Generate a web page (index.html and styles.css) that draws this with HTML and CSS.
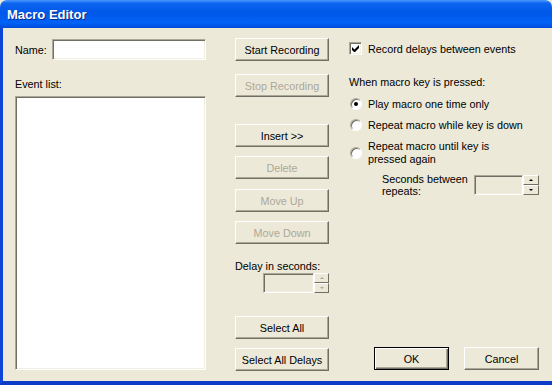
FILE: index.html
```html
<!DOCTYPE html>
<html lang="en">

<head>
    <meta charset="UTF-8">
    <meta name="viewport" content="width=device-width, initial-scale=1.0">
    <title>Macro Editor</title>
    <link rel="stylesheet" href="styles.css">
</head>

<body>

    <div class="window">
        <div class="titlebar">
            <span class="title">Macro Editor</span>
        </div>

        <div class="frame">
            <div class="dialog">

                <div class="col-list">
                    <div class="name-row">
                        <label for="macroName">Name:</label>
                        <input type="text" id="macroName" class="field name-field">
                    </div>
                    <label class="list-label">Event list:</label>
                    <div class="field listbox"></div>
                </div>

                <div class="col-buttons">
                    <button type="button" class="btn btn-start">Start Recording</button>
                    <button type="button" class="btn btn-stop" disabled>Stop Recording</button>
                    <button type="button" class="btn btn-insert">Insert &gt;&gt;</button>
                    <button type="button" class="btn btn-gap" disabled>Delete</button>
                    <button type="button" class="btn btn-gap2" disabled>Move Up</button>
                    <button type="button" class="btn btn-gap" disabled>Move Down</button>

                    <label class="delay-label">Delay in seconds:</label>
                    <div class="spin spin-delay">
                        <input type="text" class="field spin-field" disabled>
                        <div class="spin-arrows">
                            <span class="arrow arrow-up"></span>
                            <span class="arrow arrow-down"></span>
                        </div>
                    </div>

                    <button type="button" class="btn btn-select">Select All</button>
                    <button type="button" class="btn btn-gap">Select All Delays</button>
                </div>

                <div class="col-options">
                    <label class="check-row">
                        <span class="checkbox">
                            <svg width="7" height="7" viewBox="0 0 7 7">
                                <path d="M0 2v3l2 2h1l4-4V0L2.5 4.5z" fill="#000" />
                            </svg>
                        </span>
                        Record delays between events
                    </label>

                    <div class="group-label">When macro key is pressed:</div>

                    <label class="radio-row">
                        <span class="radio checked"></span>
                        Play macro one time only
                    </label>
                    <label class="radio-row">
                        <span class="radio"></span>
                        Repeat macro while key is down
                    </label>
                    <label class="radio-row two-line">
                        <span class="radio"></span>
                        <span>Repeat macro until key is<br>pressed again</span>
                    </label>

                    <div class="repeat-row">
                        <span class="repeat-label">Seconds between<br>repeats:</span>
                        <div class="spin spin-repeat">
                            <input type="text" class="field spin-field" disabled>
                            <div class="spin-arrows">
                                <span class="arrow arrow-up dark"></span>
                                <span class="arrow arrow-down dark"></span>
                            </div>
                        </div>
                    </div>

                    <div class="dialog-buttons">
                        <button type="button" class="btn btn-default">OK</button>
                        <button type="button" class="btn btn-cancel">Cancel</button>
                    </div>
                </div>

            </div>
        </div>
    </div>

</body>

</html>
```

FILE: styles.css
```css
body {
    margin: 0;
    padding: 0;
    font-family: "Liberation Sans", Arial, sans-serif;
    font-size: 10.8px;
    color: #000;
    background-color: #ece9d8;
}

.window {
    width: 552px;
    height: 385px;
    overflow: hidden;
}

.titlebar {
    height: 28px;
    box-sizing: border-box;
    padding-left: 7px;
    display: flex;
    align-items: center;
    border-radius: 7px 7px 0 0;
    background: linear-gradient(to bottom, #4a98ff 0%, #0d64f0 12%, #0058e8 45%, #0062f6 82%, #004ad8 100%);
}

.title {
    color: #fff;
    font-weight: bold;
    font-size: 13px;
    text-shadow: 1px 1px #0a2a8a;
    margin-top: 1px;
}

.frame {
    height: 357px;
    box-sizing: border-box;
    border-left: 3px solid #0b46d8;
    border-bottom: 4px solid #0a3cc9;
    background-color: #ece9d8;
}

.dialog {
    display: flex;
    height: 353px;
    padding-left: 12px;
}

/* sunken edit fields */
.field {
    box-sizing: border-box;
    border: 1px solid;
    border-color: #aca899 #fff #fff #aca899;
    box-shadow: inset 1px 1px #716f64, inset -1px -1px #f1efe2;
    background-color: #fff;
    margin: 0;
    padding: 0 3px;
    font: inherit;
    outline: none;
}

.field:disabled {
    background-color: #ece9d8;
}

/* left column */
.col-list {
    width: 191px;
    padding-top: 11px;
}

.name-row {
    display: flex;
    align-items: center;
    height: 21px;
}

.name-row label {
    width: 37px;
}

.name-field {
    width: 154px;
    height: 21px;
}

.list-label {
    display: block;
    margin-top: 17px;
    line-height: 14px;
}

.listbox {
    margin-top: 5px;
    height: 274px;
    width: 191px;
}

/* middle column */
.col-buttons {
    width: 94px;
    margin-left: 29px;
    padding-top: 10px;
    display: flex;
    flex-direction: column;
}

.btn {
    width: 94px;
    height: 23px;
    box-sizing: border-box;
    padding: 0;
    font: inherit;
    color: #000;
    background-color: #ece9d8;
    border: 1px solid;
    border-color: #fff #716f64 #716f64 #fff;
    box-shadow: inset -1px -1px #aca899;
}

.btn:disabled {
    color: #aca899;
}

.btn-stop {
    margin-top: 13px;
}

.btn-insert {
    margin-top: 27px;
}

.btn-gap {
    margin-top: 9px;
}

.btn-gap2 {
    margin-top: 10px;
}

.delay-label {
    margin-top: 15px;
    line-height: 14px;
}

.spin {
    display: flex;
    height: 20px;
}

.spin-delay {
    align-self: flex-end;
}

.spin-delay .spin-field {
    width: 51px;
    height: 20px;
}

.spin-arrows {
    width: 15px;
    display: flex;
    flex-direction: column;
}

.arrow {
    flex: 1;
    position: relative;
    box-sizing: border-box;
    background-color: #ece9d8;
    border: 1px solid;
    border-color: #fff #716f64 #716f64 #fff;
}

.arrow::after {
    content: "";
    position: absolute;
    left: 5px;
    top: 3px;
    border-left: 2px solid transparent;
    border-right: 2px solid transparent;
}

.arrow-up::after {
    border-bottom: 2px solid #aca899;
}

.arrow-down::after {
    border-top: 2px solid #aca899;
}

.arrow-up.dark::after {
    border-bottom-color: #000;
}

.arrow-down.dark::after {
    border-top-color: #000;
}

.btn-select {
    margin-top: 23px;
}

/* right column */
.col-options {
    width: 190px;
    margin-left: 20px;
    padding-top: 14px;
    padding-bottom: 11px;
    display: flex;
    flex-direction: column;
}

.check-row {
    display: flex;
    align-items: center;
    height: 13px;
}

.checkbox {
    width: 13px;
    height: 13px;
    box-sizing: border-box;
    margin-right: 6px;
    display: flex;
    align-items: center;
    justify-content: center;
    background-color: #fff;
    border: 1px solid;
    border-color: #aca899 #fff #fff #aca899;
    box-shadow: inset 1px 1px #716f64, inset -1px -1px #f1efe2;
}

.group-label {
    margin-top: 20px;
    line-height: 14px;
}

.radio-row {
    display: flex;
    align-items: center;
    line-height: 14px;
    margin-top: 8px;
}

.radio-row + .radio-row {
    margin-top: 7px;
}

.radio-row.two-line {
    margin-top: 8px;
    line-height: 13px;
}

.radio {
    width: 12px;
    height: 12px;
    box-sizing: border-box;
    margin: 0 6px 0 1px;
    border-radius: 50%;
    background-color: #fff;
    border: 1px solid;
    border-color: #aca899 #fff #fff #aca899;
    box-shadow: inset 1px 1px #716f64;
    position: relative;
    flex-shrink: 0;
}

.radio.checked::after {
    content: "";
    position: absolute;
    left: 3px;
    top: 3px;
    width: 4px;
    height: 4px;
    border-radius: 50%;
    background-color: #000;
}

.repeat-row {
    display: flex;
    align-items: center;
    margin-top: 7px;
    padding-left: 33px;
}

.repeat-label {
    width: 92px;
    line-height: 12px;
}

.spin-repeat .spin-field {
    width: 49px;
    height: 20px;
}

.spin-repeat .spin-arrows {
    width: 16px;
}

.dialog-buttons {
    margin-top: auto;
    display: flex;
    justify-content: flex-end;
    gap: 15px;
}

.dialog-buttons .btn {
    width: 75px;
}

.btn-default {
    border: 1px solid #000;
    box-shadow: inset 1px 1px #fff, inset -1px -1px #716f64, inset -2px -2px #aca899;
}
```
